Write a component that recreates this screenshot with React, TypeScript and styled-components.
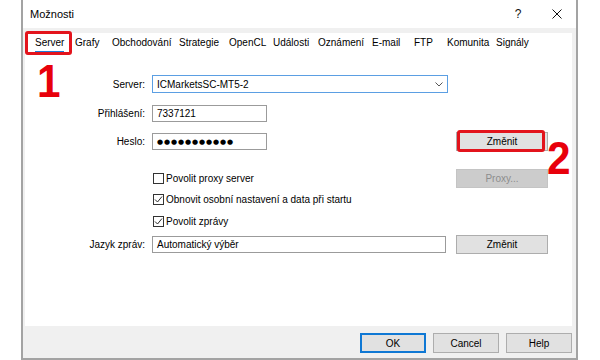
import React from "react";
import styled, { createGlobalStyle, css } from "styled-components";

const Global = createGlobalStyle`
  html, body { margin: 0; padding: 0; background: #fff; }
  body {
    font-family: "Liberation Sans", Arial, sans-serif;
    font-size: 10px;
    color: #000;
  }
  * { box-sizing: border-box; }
`;

const Page = styled.div`
  width: 600px;
  height: 360px;
  overflow: hidden;
  background: #fff;
  padding-left: 21px;
`;

const Window = styled.div`
  width: 557px;
  height: 360px;
  border: 2px solid #a3a3a3;
  border-top: none;
  background: #f0f0f0;
  display: flex;
  flex-direction: column;
`;

const TitleBar = styled.div`
  height: 28px;
  flex-shrink: 0;
  background: #fff;
  display: flex;
  align-items: center;
  padding-left: 7px;
`;

const Title = styled.span`
  flex: 1;
  font-size: 11px;
  color: #000;
`;

const CaptionButton = styled.div<{ $w: number }>`
  width: ${(p) => p.$w}px;
  height: 28px;
  display: flex;
  align-items: center;
  justify-content: center;
  font-size: 12px;
  color: #111;
`;

const Body = styled.div`
  flex: 1;
  display: flex;
  flex-direction: column;
  padding: 5px 4px 0 2px;
`;

const Panel = styled.div`
  height: 293px;
  flex-shrink: 0;
  background: #fff;
  position: relative;
`;

const TabStrip = styled.div`
  height: 22px;
  display: flex;
  align-items: flex-start;
  padding: 4px 0 0 10px;
`;

const Tab = styled.div<{ $w: number }>`
  width: ${(p) => p.$w}px;
  flex-shrink: 0;
  white-space: nowrap;
`;

const TabLabel = styled.span<{ $active?: boolean }>`
  display: inline-block;
  line-height: 12px;
  padding-bottom: 2px;
  border-bottom: 2px solid ${(p) => (p.$active ? "#1f7bd6" : "transparent")};
  color: #000;
`;

const Highlight = styled.div<{ $l: number; $t: number; $w: number; $h: number }>`
  position: absolute;
  left: ${(p) => p.$l}px;
  top: ${(p) => p.$t}px;
  width: ${(p) => p.$w}px;
  height: ${(p) => p.$h}px;
  border: 3px solid #e3141c;
  border-radius: 3px;
  pointer-events: none;
`;

const Marker = styled.div<{ $l: number; $t: number }>`
  position: absolute;
  left: ${(p) => p.$l}px;
  top: ${(p) => p.$t}px;
  font-family: "Liberation Sans", Arial, sans-serif;
  font-weight: 700;
  font-size: 47px;
  line-height: 46px;
  color: #e8000b;
  transform: scaleX(0.9);
  transform-origin: left top;
`;

const Row = styled.div<{ $mt: number; $h: number }>`
  display: grid;
  grid-template-columns: 127px 304px 92px;
  align-items: center;
  margin-top: ${(p) => p.$mt}px;
  height: ${(p) => p.$h}px;
`;

const Label = styled.div`
  text-align: right;
  padding-right: 7px;
  color: #000;
  white-space: nowrap;
`;

const Field = styled.div<{ $w: number; $h: number; $focus?: boolean }>`
  width: ${(p) => p.$w}px;
  height: ${(p) => p.$h}px;
  border: 1px solid ${(p) => (p.$focus ? "#5b9fe3" : "#9b9b9b")};
  background: #fff;
  display: flex;
  align-items: center;
  padding: 0 4px;
  color: #000;
  white-space: nowrap;
`;

const FieldText = styled.span`
  flex: 1;
`;

const Dots = styled.span`
  font-family: "DejaVu Sans", sans-serif;
  font-size: 7px;
  letter-spacing: 0.9px;
  color: #000;
`;

const CheckRow = styled.label`
  display: flex;
  align-items: center;
  gap: 2px;
  padding-left: 1px;
  white-space: nowrap;
`;

const Box = styled.span`
  width: 11px;
  height: 11px;
  border: 1px solid #333;
  background: #fff;
  display: inline-flex;
  align-items: center;
  justify-content: center;
`;

const ButtonWrap = styled.div`
  position: relative;
  width: 92px;
`;

const Button = styled.div<{ $w: number; $h: number; $kind?: "default" | "disabled" | "primary" }>`
  width: ${(p) => p.$w}px;
  height: ${(p) => p.$h}px;
  display: flex;
  align-items: center;
  justify-content: center;
  background: #e1e1e1;
  border: 1px solid #adadad;
  color: #000;
  ${(p) =>
    p.$kind === "disabled" &&
    css`
      background: #cccccc;
      border-color: #c4c4c4;
      color: #8c8c8c;
    `}
  ${(p) =>
    p.$kind === "primary" &&
    css`
      border-color: #0f78d4;
      box-shadow: inset 0 0 0 1px #0f78d4;
    `}
`;

const Footer = styled.div`
  height: 32px;
  display: flex;
  justify-content: flex-end;
  align-items: flex-start;
  gap: 7px;
  padding-top: 7px;
`;

const Check = () => (
  <svg width="9" height="9" viewBox="0 0 9 9">
    <path d="M1 4.5 L3.5 7 L8 1.5" fill="none" stroke="#2b2b2b" strokeWidth="1" />
  </svg>
);

const tabs: [string, number][] = [
  ["Server", 40],
  ["Grafy", 37],
  ["Obchodování", 67],
  ["Strategie", 50],
  ["OpenCL", 44],
  ["Události", 45],
  ["Oznámení", 54],
  ["E-mail", 42],
  ["FTP", 33],
  ["Komunita", 49],
  ["Signály", 50],
];

export default function App() {
  return (
    <>
      <Global />
      <Page>
        <Window>
          <TitleBar>
            <Title>Možnosti</Title>
            <CaptionButton $w={40}>?</CaptionButton>
            <CaptionButton $w={38}>
              <svg width="10" height="10" viewBox="0 0 10 10">
                <path d="M0.5 0.5 L9.5 9.5 M9.5 0.5 L0.5 9.5" stroke="#111" strokeWidth="1" />
              </svg>
            </CaptionButton>
          </TitleBar>
          <Body>
            <Panel>
              <TabStrip>
                {tabs.map(([name, w], i) => (
                  <Tab key={name} $w={w}>
                    <TabLabel $active={i === 0}>{name}</TabLabel>
                  </Tab>
                ))}
              </TabStrip>
              <Highlight $l={0} $t={-2} $w={47} $h={24} />
              <Marker $l={12} $t={25}>1</Marker>

              <Row $mt={20} $h={18}>
                <Label>Server:</Label>
                <Field $w={296} $h={18} $focus>
                  <FieldText>ICMarketsSC-MT5-2</FieldText>
                  <svg width="8" height="5" viewBox="0 0 8 5">
                    <path d="M0.5 0.5 L4 4 L7.5 0.5" fill="none" stroke="#555" strokeWidth="1" />
                  </svg>
                </Field>
              </Row>

              <Row $mt={12} $h={17}>
                <Label>Přihlášení:</Label>
                <Field $w={115} $h={17}>
                  <FieldText>7337121</FieldText>
                </Field>
              </Row>

              <Row $mt={10} $h={19}>
                <Label>Heslo:</Label>
                <Field $w={115} $h={17}>
                  <Dots>●●●●●●●●●●●</Dots>
                </Field>
                <ButtonWrap>
                  <Button $w={92} $h={19}>Změnit</Button>
                  <Highlight $l={1} $t={-2} $w={88} $h={22} />
                  <Marker $l={91} $t={3}>2</Marker>
                </ButtonWrap>
              </Row>

              <Row $mt={18} $h={19}>
                <span />
                <CheckRow>
                  <Box />
                  Povolit proxy server
                </CheckRow>
                <Button $w={92} $h={19} $kind="disabled">
                  Proxy...
                </Button>
              </Row>

              <Row $mt={2} $h={18}>
                <span />
                <CheckRow>
                  <Box>
                    <Check />
                  </Box>
                  Obnovit osobní nastavení a data při startu
                </CheckRow>
              </Row>

              <Row $mt={4} $h={18}>
                <span />
                <CheckRow>
                  <Box>
                    <Check />
                  </Box>
                  Povolit zprávy
                </CheckRow>
              </Row>

              <Row $mt={5} $h={19}>
                <Label>Jazyk zpráv:</Label>
                <Field $w={294} $h={17}>
                  <FieldText>Automatický výběr</FieldText>
                </Field>
                <Button $w={92} $h={19}>Změnit</Button>
              </Row>
            </Panel>
            <Footer>
              <Button $w={66} $h={20} $kind="primary">
                OK
              </Button>
              <Button $w={66} $h={20}>Cancel</Button>
              <Button $w={66} $h={20}>Help</Button>
            </Footer>
          </Body>
        </Window>
      </Page>
    </>
  );
}
